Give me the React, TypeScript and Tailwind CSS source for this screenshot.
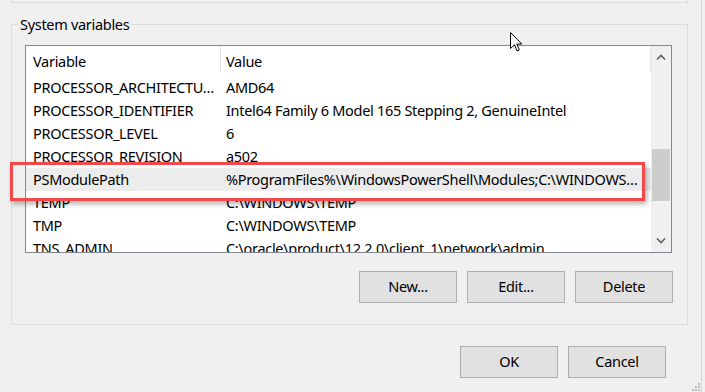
import { ReactNode } from 'react'

const ROWS: [string, string][] = [
  ['PROCESSOR_ARCHITECTU…', 'AMD64'],
  ['PROCESSOR_IDENTIFIER', 'Intel64 Family 6 Model 165 Stepping 2, GenuineIntel'],
  ['PROCESSOR_LEVEL', '6'],
  ['PROCESSOR_REVISION', 'a502'],
  ['PSModulePath', '%ProgramFiles%\\WindowsPowerShell\\Modules;C:\\WINDOWS…'],
  ['TEMP', 'C:\\WINDOWS\\TEMP'],
  ['TMP', 'C:\\WINDOWS\\TEMP'],
  ['TNS_ADMIN', 'C:\\oracle\\product\\12.2.0\\client_1\\network\\admin'],
]

function Chevron({ up }: { up?: boolean }) {
  return (
    <svg width="10" height="6" viewBox="0 0 10 6" fill="none" stroke="#606060" strokeWidth="1.6">
      {up ? <polyline points="1 5.5 5 1.5 9 5.5" /> : <polyline points="1 0.5 5 4.5 9 0.5" />}
    </svg>
  )
}

function Cursor() {
  return (
    <svg width="13" height="21" viewBox="0 0 13 21" className="absolute left-[510px] top-[32px]">
      <path d="M0.5 0.5 L0.5 16.5 L4.5 12.8 L7 19 L9.3 18 L6.8 12 L11.8 12 Z" fill="#fff" stroke="#000" strokeWidth="1" strokeLinejoin="miter" />
    </svg>
  )
}

function Button({ children }: { children: ReactNode }) {
  return (
    <button
      type="button"
      className="w-[98px] h-[32px] bg-[#e1e1e1] border border-[#adadad] text-black flex items-center justify-center"
    >
      {children}
    </button>
  )
}

export default function App() {
  return (
    <div
      className="relative w-[705px] h-[392px] bg-[#f0f0f0] overflow-hidden flex text-black text-[14.5px] tracking-[-0.3px]"
      style={{ fontFamily: '"Noto Sans", "Open Sans", sans-serif' }}
    >
      <div className="w-[701px] flex flex-col">
        {/* previous group box, bottom edge */}
        <div className="ml-[11px] w-[677px] h-[3px] border-x border-b border-[#dcdcdc]" />

        {/* System variables */}
        <fieldset className="ml-[11px] mt-[11px] w-[677px] border border-[#dcdcdc] pl-[13px] pr-[14px] pt-[11px] pb-[21px]">
          <legend className="ml-[-7px] px-[2px] leading-[20px]">System variables</legend>

          <div className="relative w-[647px] h-[208px] border border-[#828790] bg-white flex overflow-hidden">
            <div className="flex-1 flex flex-col">
              {/* header */}
              <div className="h-[30px] flex shrink-0">
                <div className="w-[195px] h-[26px] pl-[7px] pt-[5px] leading-[20px] border-r border-[#e5e5e5] overflow-visible whitespace-nowrap">Variable</div>
                <div className="flex-1 h-[26px] pl-[5px] pt-[5px] leading-[20px] border-r border-[#e5e5e5] overflow-visible">Value</div>
              </div>
              {ROWS.map(([name, value]) => (
                <div
                  key={name}
                  className={`h-[23px] shrink-0 flex items-center whitespace-nowrap ${name === 'PSModulePath' ? 'bg-[#ececec]' : ''}`}
                >
                  <div className="w-[195px] pl-[7px] overflow-hidden">{name}</div>
                  <div className="flex-1 pl-[5px] overflow-hidden">{value}</div>
                </div>
              ))}
            </div>

            {/* scrollbar */}
            <div className="w-[20px] bg-[#f0f0f0] flex flex-col items-center">
              <div className="h-[22px] flex items-center justify-center shrink-0"><Chevron up /></div>
              <div className="h-[81px] shrink-0" />
              <div className="w-[18px] h-[52px] bg-[#cdcdcd] shrink-0" />
              <div className="flex-1" />
              <div className="h-[22px] flex items-center justify-center shrink-0"><Chevron /></div>
            </div>
          </div>

          <div className="mt-[18px] flex justify-end gap-[10px]">
            <Button>New...</Button>
            <Button>Edit...</Button>
            <Button>Delete</Button>
          </div>
        </fieldset>

        <div className="mt-[21px] pr-[35px] flex justify-end gap-[10px]">
          <Button>OK</Button>
          <Button>Cancel</Button>
        </div>
      </div>
      <div className="w-px bg-[#d6d6d6]" />

      {/* highlight annotation */}
      <div className="absolute left-[10px] top-[162px] w-[635px] h-[39px] border-[3px] border-[#f24a4a] shadow-[2px_3px_5px_rgba(0,0,0,0.3)]" />

      <Cursor />

      {/* resize grip */}
      <svg width="10" height="10" viewBox="0 0 10 10" className="absolute right-[4px] bottom-0" fill="#b8b8b8">
        <rect x="7" y="1" width="2" height="2" />
        <rect x="4" y="4" width="2" height="2" />
        <rect x="7" y="4" width="2" height="2" />
        <rect x="1" y="7" width="2" height="2" />
        <rect x="4" y="7" width="2" height="2" />
        <rect x="7" y="7" width="2" height="2" />
      </svg>
    </div>
  )
}
